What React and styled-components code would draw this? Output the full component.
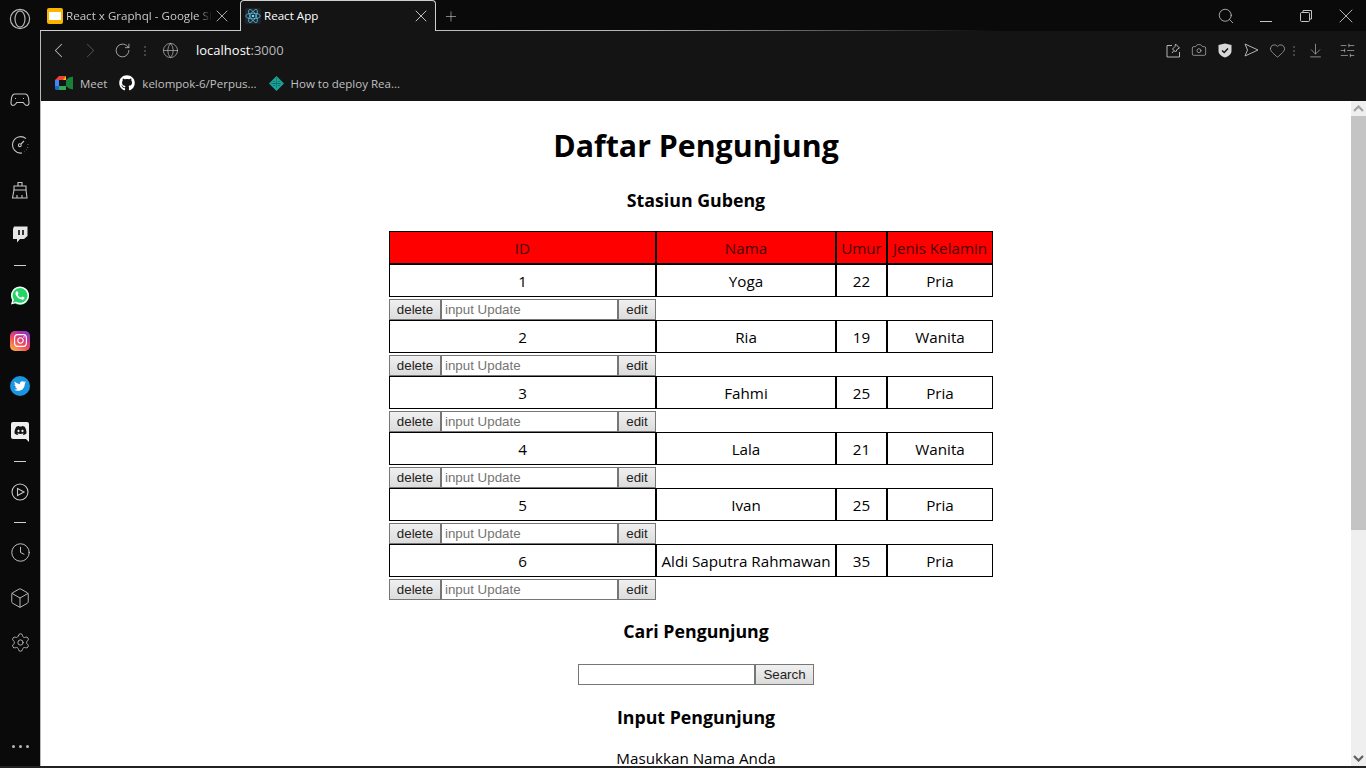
import React, { Fragment } from "react";
import styled, { createGlobalStyle } from "styled-components";
import {
  ArrowDownToLine,
  Box,
  Camera,
  ChevronLeft,
  ChevronRight,
  Clock,
  Globe,
  Heart,
  Plus,
  RotateCw,
  Search,
  Settings,
  SlidersHorizontal,
  X,
} from "lucide-react";
import { FaDiscord, FaGithub, FaTwitter, FaWhatsapp } from "react-icons/fa";
import { SiInstagram } from "react-icons/si";

const PEOPLE = [
  { id: 1, name: "Yoga", age: 22, gender: "Pria" },
  { id: 2, name: "Ria", age: 19, gender: "Wanita" },
  { id: 3, name: "Fahmi", age: 25, gender: "Pria" },
  { id: 4, name: "Lala", age: 21, gender: "Wanita" },
  { id: 5, name: "Ivan", age: 25, gender: "Pria" },
  { id: 6, name: "Aldi Saputra Rahmawan", age: 35, gender: "Pria" },
];

const App = () => {
  return (
    <Frame>
      <GlobalStyle />
      <Sidebar>
        <LogoSlot>
          <svg width="22" height="22" viewBox="0 0 22 22" fill="none" stroke="#b4b4b4" strokeWidth="1.2">
            <circle cx="11" cy="11" r="9.6" />
            <ellipse cx="11" cy="11" rx="5" ry="8.2" />
          </svg>
        </LogoSlot>
        <SideSlot>
          <svg width="20" height="14" viewBox="0 0 20 14" fill="none" stroke="currentColor" strokeWidth="1.1">
            <path d="M5 1h10c2 0 3 1.500 3.500 4l.5 4.500c.2 1.800-1 3-2 3-1.200 0-2-.6-3-2l-.7-1H6.700l-.7 1c-1 1.400-1.800 2-3 2-1 0-2.200-1.200-2-3L1.500 5C2 2.500 3 1 5 1z" />
            <path d="M5 5.500h2M13 5.500h2" strokeDasharray="1 1" />
          </svg>
        </SideSlot>
        <SideSlot>
          <svg width="18" height="18" viewBox="0 0 18 18" fill="none" stroke="currentColor" strokeWidth="1.1">
            <path d="M15 2.600A8.200 8.200 0 1 0 11 17" />
            <path d="M17 8v.5M16.600 11v.4M15.400 13.600l-.2.3M13.400 15.600l-.3.2" />
            <circle cx="8.800" cy="9.200" r="1.400" />
            <path d="M10 8l3-3" />
          </svg>
        </SideSlot>
        <SideSlot>
          <svg width="18" height="18" viewBox="0 0 18 18" fill="none" stroke="currentColor" strokeWidth="1.1">
            <path d="M7 5V1.500h4V5" />
            <path d="M3 9V5h12v4" />
            <path d="M3 9h12l1 8H1.500z" />
            <path d="M6 17v-3M11 17v-3" />
          </svg>
        </SideSlot>
        <SideSlot>
          <svg width="16" height="17" viewBox="0 0 16 17">
            <path d="M2 .5h13.500V10L12 13H8l-3 3.500V13H1V3z" fill="#e6e6e6" />
            <path d="M7 4v5M11 4v5" stroke="#0a0a0a" strokeWidth="1.600" />
          </svg>
        </SideSlot>
        <SideDivider />
        <SideSlot>
          <WhatsappBadge>
            <FaWhatsapp size={21} color="#fff" />
          </WhatsappBadge>
        </SideSlot>
        <SideSlot>
          <InstagramBadge>
            <SiInstagram size={13} color="#fff" />
          </InstagramBadge>
        </SideSlot>
        <SideSlot>
          <TwitterBadge>
            <FaTwitter size={12} color="#fff" />
          </TwitterBadge>
        </SideSlot>
        <SideSlot>
          <DiscordBadge>
            <FaDiscord size={13} color="#141414" />
          </DiscordBadge>
        </SideSlot>
        <SideDivider />
        <SideSlot>
          <svg width="18" height="18" viewBox="0 0 18 18" fill="none" stroke="currentColor" strokeWidth="1.1">
            <circle cx="9" cy="9" r="8" />
            <path d="M6.500 5.500l6.500 3.500-6.500 3.500z" />
          </svg>
        </SideSlot>
        <SideDivider />
        <SideSlot>
          <Clock size={21} strokeWidth={1.1} />
        </SideSlot>
        <SideSlot>
          <Box size={22} strokeWidth={1} />
        </SideSlot>
        <SideSlot>
          <Settings size={21} strokeWidth={1} />
        </SideSlot>
        <MoreDots>
          <i />
          <i />
          <i />
        </MoreDots>
      </Sidebar>

      <Main>
        <TabStrip>
          <Tab>
            <SlidesIcon />
            <TabLabel>React x Graphql - Google Slides</TabLabel>
            <X size={20} strokeWidth={1} color="#c8c8c8" />
          </Tab>
          <Tab $active>
            <ReactIcon>
              <svg width="16" height="16" viewBox="-12 -12 24 24" fill="none" stroke="#61dafb" strokeWidth="1">
                <circle r="2" fill="#61dafb" stroke="none" />
                <ellipse rx="11" ry="4.200" />
                <ellipse rx="11" ry="4.200" transform="rotate(60)" />
                <ellipse rx="11" ry="4.200" transform="rotate(120)" />
              </svg>
            </ReactIcon>
            <TabLabel $active>React App</TabLabel>
            <X size={20} strokeWidth={1} color="#e4e4e4" />
          </Tab>
          <NewTab>
            <Plus size={19} strokeWidth={0.9} />
          </NewTab>
          <WindowControls>
            <WindowButton>
              <Search size={18} strokeWidth={1.1} />
            </WindowButton>
            <WindowButton>
              <svg width="14" height="14" viewBox="0 0 14 14" stroke="currentColor" strokeWidth="1">
                <path d="M1 12.500h12" />
              </svg>
            </WindowButton>
            <WindowButton>
              <svg width="14" height="14" viewBox="0 0 14 14" fill="none" stroke="currentColor" strokeWidth="1">
                <rect x="1.500" y="3.500" width="9" height="9" rx="1" />
                <path d="M4 3.500V1.500h8.500V10h-2" />
              </svg>
            </WindowButton>
            <WindowButton>
              <X size={24} strokeWidth={0.9} />
            </WindowButton>
          </WindowControls>
        </TabStrip>

        <Content>
          <Toolbar>
            <NavIcon>
              <ChevronLeft size={25} strokeWidth={1} />
            </NavIcon>
            <NavIcon $muted>
              <ChevronRight size={25} strokeWidth={1} />
            </NavIcon>
            <NavIcon>
              <RotateCw size={17} strokeWidth={1.2} />
            </NavIcon>
            <DotColumn $left={6} $right={8} />
            <NavIcon>
              <Globe size={17} strokeWidth={1} />
            </NavIcon>
            <Address>
              localhost<span>:3000</span>
            </Address>
            <ToolActions>
              <ToolIcon>
                <svg width="15" height="15" viewBox="0 0 15 15" fill="none" stroke="currentColor" strokeWidth="1">
                  <path d="M6 2.500H1v11.500h12.500V9" />
                  <path d="M9.500 1l4 4-2 1-2 3-3-3 2.500-2.500z" />
                  <path d="M6 10l2-2.500" />
                </svg>
              </ToolIcon>
              <ToolIcon>
                <Camera size={16} strokeWidth={1.1} />
              </ToolIcon>
              <ToolIcon>
                <svg width="14" height="15" viewBox="0 0 14 15">
                  <path d="M7 .5l6.500 1.500v6c0 3-3 5.500-6.500 6.500C3.500 13.500.5 11 .5 8V2z" fill="#d8d8d8" />
                  <path d="M4 7.500l2.200 2L10 5.500" fill="none" stroke="#141414" strokeWidth="1.500" />
                </svg>
              </ToolIcon>
              <ToolIcon>
                <svg width="15" height="14" viewBox="0 0 15 14" fill="none" stroke="currentColor" strokeWidth="1">
                  <path d="M1 1l13 6-13 6 2.500-6z" />
                </svg>
              </ToolIcon>
              <ToolIcon>
                <Heart size={17} strokeWidth={1} />
              </ToolIcon>
              <DotColumn $left={3} $right={4} />
              <ToolIcon $wide>
                <ArrowDownToLine size={17} strokeWidth={1} />
              </ToolIcon>
              <ToolIcon $wide>
                <SlidersHorizontal size={17} strokeWidth={1} />
              </ToolIcon>
            </ToolActions>
          </Toolbar>

          <Bookmarks>
            <Bookmark>
              <svg width="18" height="14" viewBox="0 0 18 14">
                <path d="M4 0h7v4H4v3H0V4z" fill="#ea4335" />
                <path d="M0 4h4v6H0z" fill="#4285f4" />
                <path d="M0 10h4v4H1.500C.6 14 0 13.400 0 12.500z" fill="#1967d2" />
                <path d="M4 10h7v4H4z" fill="#34a853" />
                <path d="M11 0v4H8z" fill="#fbbc04" />
                <path d="M4 4h7v6H4z" fill="#141414" />
                <path d="M11 4l3-2.500 4-1v13l-4-1-3-2.500z" fill="#188038" />
              </svg>
              <span>Meet</span>
            </Bookmark>
            <Bookmark>
              <FaGithub size={16} color="#fff" />
              <span>kelompok-6/Perpus...</span>
            </Bookmark>
            <Bookmark>
              <svg width="15" height="15" viewBox="0 0 15 15">
                <path d="M7.500 0L15 7.500 7.500 15 0 7.500z" fill="#1aa39a" />
                <path d="M7.500 2.500v10M5 5v5M10 5v5M2.500 7.500h10" stroke="#0d4f4b" strokeWidth="1" strokeDasharray="1 1" />
              </svg>
              <span>How to deploy Rea...</span>
            </Bookmark>
          </Bookmarks>

          <Viewport>
            <Page>
              <Title>Daftar Pengunjung</Title>
              <Subtitle>Stasiun Gubeng</Subtitle>
              <Table>
                <colgroup>
                  <col width="267" />
                  <col width="180" />
                  <col width="51" />
                  <col width="106" />
                </colgroup>
                <thead>
                  <tr>
                    <HeadCell>ID</HeadCell>
                    <HeadCell>Nama</HeadCell>
                    <HeadCell>Umur</HeadCell>
                    <HeadCell>Jenis Kelamin</HeadCell>
                  </tr>
                </thead>
                <tbody>
                  {PEOPLE.map((p) => (
                    <Fragment key={p.id}>
                      <tr>
                        <Cell>{p.id}</Cell>
                        <Cell>{p.name}</Cell>
                        <Cell>{p.age}</Cell>
                        <Cell>{p.gender}</Cell>
                      </tr>
                      <tr>
                        <ActionCell>
                          <ActionRow>
                            <Button $width={52}>delete</Button>
                            <TextInput $width={177} placeholder="input Update" />
                            <Button $width={38}>edit</Button>
                          </ActionRow>
                        </ActionCell>
                      </tr>
                    </Fragment>
                  ))}
                </tbody>
              </Table>
              <Subtitle $top={19}>Cari Pengunjung</Subtitle>
              <SearchRow>
                <TextInput $width={177} />
                <Button $width={59}>Search</Button>
              </SearchRow>
              <Subtitle $top={20}>Input Pengunjung</Subtitle>
              <FieldLabel>Masukkan Nama Anda</FieldLabel>
            </Page>
            <ScrollRail>
              <ScrollArrow>
                <svg width="11" height="7" viewBox="0 0 11 7" fill="none" stroke="#a3a3a3" strokeWidth="2.200">
                  <path d="M1 6l4.500-4.500L10 6" />
                </svg>
              </ScrollArrow>
              <ScrollThumb />
              <ScrollArrow $bottom>
                <svg width="11" height="7" viewBox="0 0 11 7" fill="none" stroke="#5f5f5f" strokeWidth="2.200">
                  <path d="M1 1l4.500 4.500L10 1" />
                </svg>
              </ScrollArrow>
            </ScrollRail>
          </Viewport>
        </Content>
      </Main>
    </Frame>
  );
};

const GlobalStyle = createGlobalStyle`
  html, body {
    margin: 0;
    height: 100%;
    overflow: hidden;
    background: #0a0a0a;
  }
  #root {
    height: 100%;
  }
`;

const Frame = styled.div`
  display: flex;
  box-sizing: border-box;
  height: 768px;
  border-bottom: 2px solid #222;
  background: #0a0a0a;
  font-family: "Open Sans", "Noto Sans", sans-serif;
`;

const Sidebar = styled.nav`
  display: flex;
  flex-direction: column;
  align-items: center;
  flex: 0 0 40px;
  color: #c4c4c4;
`;

const LogoSlot = styled.div`
  display: flex;
  align-items: center;
  justify-content: center;
  flex: 0 0 38px;
  margin-bottom: 39px;
`;

const SideSlot = styled.div`
  display: flex;
  align-items: center;
  justify-content: center;
  flex: 0 0 45px;
`;

const SideDivider = styled.div`
  flex: 0 0 16px;
  width: 100%;
  background: linear-gradient(#d0d0d0, #d0d0d0) center / 12px 1px no-repeat;
`;

const AppBadge = styled.div`
  display: flex;
  align-items: center;
  justify-content: center;
  width: 20px;
  height: 20px;
`;

const WhatsappBadge = styled(AppBadge)`
  width: 18px;
  height: 18px;
  border-radius: 50%;
  background: #25d366;
`;

const InstagramBadge = styled(AppBadge)`
  border-radius: 5px;
  background: linear-gradient(35deg, #fdb24a 5%, #ee4a5e 45%, #b52fa8 75%, #6a4ad0);
`;

const TwitterBadge = styled(AppBadge)`
  border-radius: 50%;
  background: #1b95e0;
`;

const DiscordBadge = styled(AppBadge)`
  position: relative;
  width: 18px;
  height: 17px;
  border-radius: 2px 2px 0 2px;
  background: #efefef;

  &::after {
    content: "";
    position: absolute;
    right: 0;
    bottom: -3px;
    border-top: 3px solid #efefef;
    border-left: 3px solid transparent;
  }
`;

const MoreDots = styled.div`
  display: flex;
  align-items: center;
  justify-content: center;
  gap: 4px;
  flex: 0 0 40px;
  margin-top: auto;

  i {
    width: 3px;
    height: 3px;
    border-radius: 50%;
    background: #b8b8b8;
  }
`;

const Main = styled.div`
  display: flex;
  flex-direction: column;
  flex: 1;
  min-width: 0;
`;

const TabStrip = styled.div`
  position: relative;
  display: flex;
  align-items: flex-end;
  flex: 0 0 31px;
  box-sizing: border-box;
  padding-left: 7px;
  background: linear-gradient(90deg, #cfcfcf 0, #b4b4b4 45%, #0a0a0a 72%) left bottom / 100% 1px no-repeat;
`;

const Tab = styled.div`
  display: flex;
  align-items: center;
  box-sizing: border-box;
  height: 31px;
  width: ${(p) => (p.$active ? "196px" : "186px")};
  margin-left: ${(p) => (p.$active ? "7px" : "0")};
  padding: ${(p) => (p.$active ? "0 4px 0 4px" : "0 1px 0 0")};
  ${(p) =>
    p.$active &&
    `
    background: #141414;
    border: 1px solid #cfcfcf;
    border-bottom: none;
    border-radius: 4px 4px 0 0;
  `}
`;

const SlidesIcon = styled.span`
  flex: none;
  box-sizing: border-box;
  width: 16px;
  height: 16px;
  border: 3px solid #fbb400;
  border-width: 4px 2px;
  border-radius: 2px;
  background: #fff;
`;

const ReactIcon = styled.span`
  display: flex;
  align-items: center;
  justify-content: center;
  flex: none;
  width: 16px;
  height: 16px;
  border-radius: 2px;
  background: #20232a;
`;

const TabLabel = styled.span`
  flex: 1;
  overflow: hidden;
  margin-left: 3px;
  color: ${(p) => (p.$active ? "#fff" : "#c8c8c8")};
  font-size: 11.6px;
  line-height: 16px;
  white-space: nowrap;
  ${(p) => !p.$active && "mask-image: linear-gradient(90deg, #000 90%, transparent);"}
`;

const NewTab = styled.div`
  display: flex;
  align-items: center;
  justify-content: center;
  width: 16px;
  height: 30px;
  margin-left: 7px;
  color: #d0d0d0;
`;

const WindowControls = styled.div`
  display: flex;
  align-items: center;
  height: 30px;
  margin-left: auto;
  color: #c4c4c4;
`;

const WindowButton = styled.span`
  display: flex;
  align-items: center;
  justify-content: center;
  width: 40px;
`;

const Content = styled.div`
  display: flex;
  flex-direction: column;
  flex: 1;
  min-height: 0;
  border-left: 1px solid #b9b9b9;
  background: #141414;
`;

const Toolbar = styled.div`
  display: flex;
  align-items: center;
  flex: 0 0 38px;
  padding-left: 1px;
`;

const NavIcon = styled.span`
  display: flex;
  align-items: center;
  justify-content: center;
  width: 32px;
  color: ${(p) => (p.$muted ? "#4d4d4d" : "#b8b8b8")};
`;

const DotColumn = styled.i`
  width: 2px;
  height: 11px;
  margin: 0 ${(p) => p.$right}px 0 ${(p) => p.$left}px;
  background: radial-gradient(circle, #444 1px, transparent 1px) 0 0 / 2px 4px;
`;

const Address = styled.div`
  margin-left: 10px;
  color: #fff;
  font-size: 13px;

  span {
    color: #b8b8b8;
  }
`;

const ToolActions = styled.div`
  display: flex;
  align-items: center;
  margin-left: auto;
  padding-right: 3px;
  color: #b4b4b4;
`;

const ToolIcon = styled.span`
  display: flex;
  align-items: center;
  justify-content: center;
  width: ${(p) => (p.$wide ? "32px" : "26px")};
`;

const Bookmarks = styled.div`
  display: flex;
  align-items: center;
  gap: 12px;
  flex: 0 0 32px;
  box-sizing: border-box;
  padding: 0 0 4px 14px;
`;

const Bookmark = styled.div`
  display: flex;
  align-items: center;
  gap: 7px;
  color: #c0c0c0;
  font-size: 11.5px;
  white-space: nowrap;
`;

const Viewport = styled.div`
  display: flex;
  flex: 1;
  min-height: 0;
  background: #fff;
`;

const Page = styled.main`
  display: flex;
  flex-direction: column;
  align-items: center;
  flex: 1;
  min-width: 0;
  overflow: hidden;
  color: #000;
`;

const Title = styled.h1`
  margin: 24px 0 21px;
  font-size: 30.3px;
  font-weight: 700;
  line-height: 42px;
`;

const Subtitle = styled.h3`
  margin: ${(p) => p.$top || 0}px 0 0;
  font-size: 17.75px;
  font-weight: 700;
  line-height: 24px;
`;

const Table = styled.table`
  box-sizing: border-box;
  width: 604px;
  margin: 19px 10px 0 0;
  border-spacing: 0;
  table-layout: fixed;
  font-size: 15.2px;
`;

const Cell = styled.td`
  box-sizing: border-box;
  height: 33px;
  padding: 0;
  border: 1px solid #000;
  text-align: center;
  white-space: nowrap;
`;

const HeadCell = styled(Cell).attrs({ as: "th" })`
  background: #f00;
  color: #4a0000;
  font-weight: 400;
`;

const ActionCell = styled.td`
  box-sizing: border-box;
  height: 23px;
  padding: 2px 0 0;
`;

const ActionRow = styled.div`
  display: flex;
  height: 21px;
`;

const Button = styled.button`
  box-sizing: border-box;
  width: ${(p) => p.$width}px;
  height: 21px;
  padding: 0;
  border: 1px solid #767676;
  border-radius: 0;
  background: linear-gradient(#f0f0f0, #dcdcdc);
  color: #222;
  font-family: "Liberation Sans", Arial, sans-serif;
  font-size: 13.33px;
`;

const TextInput = styled.input`
  box-sizing: border-box;
  width: ${(p) => p.$width}px;
  height: 21px;
  padding: 1px 3px;
  border: 1px solid #767676;
  border-radius: 0;
  outline: none;
  background: #fff;
  font-family: "Liberation Sans", Arial, sans-serif;
  font-size: 13.33px;

  &::placeholder {
    color: #757575;
  }
`;

const SearchRow = styled.div`
  display: flex;
  margin-top: 21px;
`;

const FieldLabel = styled.div`
  margin-top: 18px;
  font-size: 15.2px;
  line-height: 22px;
`;

const ScrollRail = styled.div`
  display: flex;
  flex-direction: column;
  flex: 0 0 15px;
  background: #efefef;
`;

const ScrollArrow = styled.div`
  display: flex;
  align-items: center;
  justify-content: center;
  flex: 0 0 15px;
  margin-top: ${(p) => (p.$bottom ? "auto" : "0")};
`;

const ScrollThumb = styled.div`
  flex: 0 0 414px;
  background: #c4c4c4;
`;

export default App;
